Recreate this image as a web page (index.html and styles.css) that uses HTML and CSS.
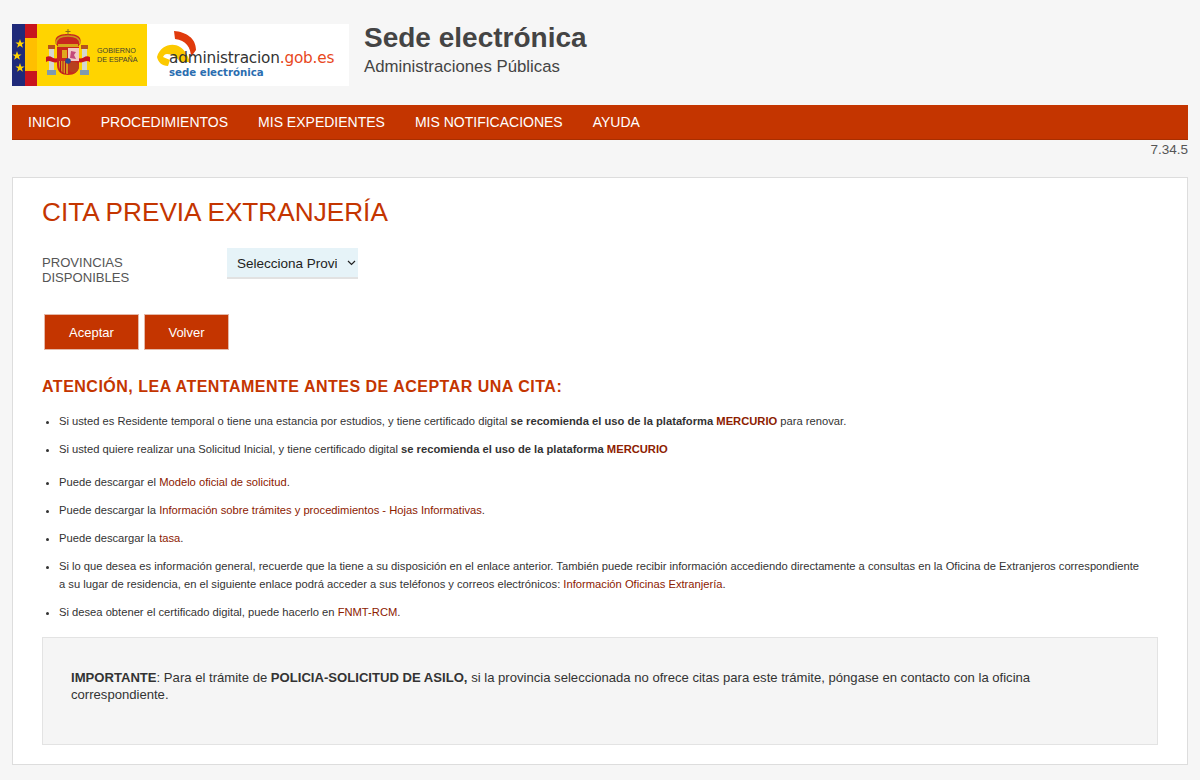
FILE: index.html
```html
<!DOCTYPE html>
<html lang="es">
<head>
  <meta charset="UTF-8" />
  <meta name="viewport" content="width=device-width, initial-scale=1.0"/>
  <title>Sede electrónica</title>
  <link rel="stylesheet" href="styles.css">
</head>
<body>
  <header class="top">
    <div class="logos">
      <div class="logo-gob">
        <svg class="flag" width="135" height="62" viewBox="0 0 135 62">
          <rect width="135" height="62" fill="#ffd400"/>
          <rect width="13" height="62" fill="#1f2a7a"/>
          <rect x="13" width="12" height="62" fill="#ffbf00"/>
          <rect x="13" width="12" height="14" fill="#c8141e"/>
          <rect x="13" y="47" width="12" height="15" fill="#c8141e"/>
          <polygon points="8,15 9.200,18.400 12.600,18.400 9.900,20.500 10.900,23.800 8,21.800 5.100,23.800 6.100,20.500 3.400,18.400 6.800,18.400" fill="#ffd400"/>
          <polygon points="5,27 6.200,30.400 9.600,30.400 6.900,32.500 7.900,35.800 5,33.800 2.100,35.800 3.100,32.500 0.400,30.400 3.800,30.400" fill="#ffd400"/>
          <polygon points="8,39 9.200,42.400 12.600,42.400 9.900,44.500 10.900,47.800 8,45.800 5.100,47.800 6.100,44.500 3.400,42.400 6.800,42.400" fill="#ffd400"/>
          <rect x="37" y="25" width="5" height="21" fill="#d5d6cf"/>
          <rect x="70" y="25" width="5" height="21" fill="#d5d6cf"/>
          <rect x="35" y="46" width="9" height="5" fill="#7f9ab0"/>
          <rect x="68" y="46" width="9" height="5" fill="#7f9ab0"/>
          <rect x="36" y="21" width="7" height="4" fill="#b5541e"/>
          <rect x="69" y="21" width="7" height="4" fill="#b5541e"/>
          <path d="M34 33 C39 30 41 36 46 34 L46 38 C41 40 38 35 34 38Z" fill="#c8141e"/>
          <path d="M78 33 C73 30 71 36 66 34 L66 38 C71 40 74 35 78 38Z" fill="#c8141e"/>
          <path d="M44 20 C41 11 50 10 56 10 C62 10 71 11 68 20 L66 23 H46Z" fill="#c8281e"/>
          <path d="M44 20 C44 14 50 12 56 12 C62 12 68 14 68 20" fill="none" stroke="#c79a1e" stroke-width="1.500"/>
          <path d="M56 5 V11 M53.500 7.500 H58.500" stroke="#8a6d1a" stroke-width="1"/>
          <rect x="46" y="20" width="20" height="3" fill="#d6a51e"/>
          <path d="M45 23 H67 V41 C67 48 62 51 56 51 C50 51 45 48 45 41Z" fill="#c8281e"/>
          <rect x="56" y="24" width="11" height="13" fill="#f2c9c6"/>
          <path d="M59 27 L64 28 L62 31 L64 35 L58 34Z" fill="#c44a7a"/>
          <rect x="50" y="26" width="5" height="8" fill="#e0a81e"/>
          <path d="M47 37 H56 V50 C51 50 47 46 47 41Z" fill="#d89a1c"/>
          <path d="M48.500 37 V48 M51 37 V50 M53.500 37 V50" stroke="#b8141e" stroke-width="1"/>
          <circle cx="61.500" cy="43" r="5.500" fill="#b8401e"/>
          <circle cx="56" cy="37" r="2.800" fill="#2a4a90"/>
        </svg>
        <span class="gob-text">GOBIERNO<br>DE ESPAÑA</span>
      </div>
      <div class="logo-admin">
        <svg class="swoosh" width="50" height="46" viewBox="0 0 50 46">
          <path d="M7 33 C10 22 22 18 30 23 C35 26 38 32 40 38 L30 38 C27 33 22 30 17 30 C15 30 14 31 13 33 L20 36 L18 42 C12 42 8 38 7 33Z" fill="#fcc900"/>
          <path d="M24 7 C36 8 46 14 46 26 L41 33 C41 24 36 16 25 15Z" fill="#e03a0c"/>
        </svg>
        <div class="admin-line"><span class="admin-dark">administracion</span><span class="admin-red">.gob.es</span></div>
        <div class="admin-sub">sede electrónica</div>
      </div>
    </div>
    <div class="site-title">
      <h1>Sede electrónica</h1>
      <p>Administraciones Públicas</p>
    </div>
  </header>

  <nav class="menu">
    <a href="#">INICIO</a>
    <a href="#">PROCEDIMIENTOS</a>
    <a href="#">MIS EXPEDIENTES</a>
    <a href="#">MIS NOTIFICACIONES</a>
    <a href="#">AYUDA</a>
  </nav>
  <div class="version">7.34.5</div>

  <main class="panel">
    <h2>CITA PREVIA EXTRANJERÍA</h2>

    <div class="field">
      <label for="provincia">PROVINCIAS DISPONIBLES</label>
      <div class="select-wrap">
        <select id="provincia">
          <option>Selecciona Provincia</option>
        </select>
        <svg class="chevron" width="9" height="6" viewBox="0 0 9 6"><path d="M1 1 L4.500 4.500 L8 1" fill="none" stroke="#222" stroke-width="1.200"/></svg>
      </div>
    </div>

    <div class="buttons">
      <button>Aceptar</button>
      <button>Volver</button>
    </div>

    <h3>ATENCIÓN, LEA ATENTAMENTE ANTES DE ACEPTAR UNA CITA:</h3>

    <ul class="notes">
      <li>Si usted es Residente temporal o tiene una estancia por estudios, y tiene certificado digital <strong>se recomienda el uso de la plataforma <a href="#">MERCURIO</a></strong> para renovar.</li>
      <li class="extra">Si usted quiere realizar una Solicitud Inicial, y tiene certificado digital <strong>se recomienda el uso de la plataforma <a href="#">MERCURIO</a></strong></li>
      <li>Puede descargar el <a href="#">Modelo oficial de solicitud</a>.</li>
      <li>Puede descargar la <a href="#">Información sobre trámites y procedimientos - Hojas Informativas</a>.</li>
      <li>Puede descargar la <a href="#">tasa</a>.</li>
      <li>Si lo que desea es información general, recuerde que la tiene a su disposición en el enlace anterior. También puede recibir información accediendo directamente a consultas en la Oficina de Extranjeros correspondiente a su lugar de residencia, en el siguiente enlace podrá acceder a sus teléfonos y correos electrónicos: <a href="#">Información Oficinas Extranjería</a>.</li>
      <li>Si desea obtener el certificado digital, puede hacerlo en <a href="#">FNMT-RCM</a>.</li>
    </ul>

    <div class="well">
      <p><strong>IMPORTANTE</strong>: Para el trámite de <strong>POLICIA-SOLICITUD DE ASILO,</strong> si la provincia seleccionada no ofrece citas para este trámite, póngase en contacto con la oficina correspondiente.</p>
    </div>
  </main>
</body>
</html>
```

FILE: styles.css
```css
* { box-sizing: border-box; }
body { margin: 0; padding: 24px 12px 0; background: #f6f6f6; font-family: "Liberation Sans", Arial, sans-serif; color: #333; }

.top { display: flex; height: 62px; margin-bottom: 19px; }
.logos { display: flex; width: 337px; height: 62px; background: #fff; }
.logo-gob { width: 135px; height: 62px; background: #ffd400; position: relative; }
.flag { display: block; }
.gob-text { position: absolute; left: 85px; top: 22px; font-size: 7.200px; line-height: 9px; color: #3f3f30; white-space: nowrap; }
.logo-admin { flex: 1; position: relative; padding: 27px 0 0 22px; }
.swoosh { position: absolute; left: 3px; top: 0; }
.admin-line { position: relative; font-family: "DejaVu Sans", sans-serif; font-size: 15.300px; line-height: 15px; letter-spacing: -0.2px; white-space: nowrap; }
.admin-dark { color: #333; }
.admin-red { color: #e8481c; }
.admin-sub { position: relative; font-family: "DejaVu Sans", sans-serif; font-weight: bold; font-size: 10.200px; line-height: 13px; color: #2a6db0; white-space: nowrap; }
.site-title { padding: 0 0 0 15px; }
.site-title h1 { margin: 0; font-size: 28px; line-height: 28px; font-weight: bold; color: #444; }
.site-title p { margin: 5px 0 0; font-size: 16.800px; line-height: 20px; color: #444; }

.menu { display: flex; gap: 30px; height: 35px; padding: 0 16px; background: #c43500; border-bottom: 1px solid #a82e00; align-items: center; }
.menu a { color: #fff; font-size: 14px; text-decoration: none; }

.version { height: 37px; padding-top: 2px; text-align: right; font-size: 13.500px; line-height: 16px; color: #555; }

.panel { height: 588px; padding: 0 29px; background: #fff; border: 1px solid #ddd; }
.panel h2 { margin: 19px 0 0; font-size: 26.200px; line-height: 30px; font-weight: normal; color: #c43500; }

.field { display: flex; margin-top: 21px; height: 39px; }
.field label { width: 185px; padding: 7px 50px 0 0; font-size: 13.100px; line-height: 15px; color: #555; }
.select-wrap { position: relative; width: 131px; height: 31px; }
.select-wrap select { display: block; width: 100%; height: 31px; padding: 1px 21px 0 10px; appearance: none; background: #e6f3f8; border: 0; border-bottom: 2px solid #e2e2e2; border-radius: 0; font-family: inherit; font-size: 13.500px; color: #222; }
.chevron { position: absolute; right: 2px; top: 12px; }

.buttons { display: flex; gap: 5px; margin: 27px 0 0 2px; }
.buttons button { height: 36px; background: #c43500; border: 1px solid #e4b8a8; color: #fff; font-family: inherit; font-size: 13px; }
.buttons button:first-child { width: 95px; }
.buttons button:last-child { width: 85px; }

.panel h3 { margin: 28px 0 0; font-size: 16px; line-height: 18px; font-weight: bold; color: #c43500; letter-spacing: 0.5px; }

.notes { margin: 16px 0 0; padding: 0 12px 0 17px; font-size: 11.200px; line-height: 18px; color: #333; }
.notes li { margin-bottom: 10px; }
.notes li.extra { margin-bottom: 15px; }
.notes a { color: #8c2000; text-decoration: none; }

.well { height: 108px; margin-top: 16px; padding: 31px 60px 0 28px; background: #f5f5f5; border: 1px solid #e3e3e3; }
.well p { margin: 0; font-size: 13.100px; line-height: 17px; color: #333; }
```
